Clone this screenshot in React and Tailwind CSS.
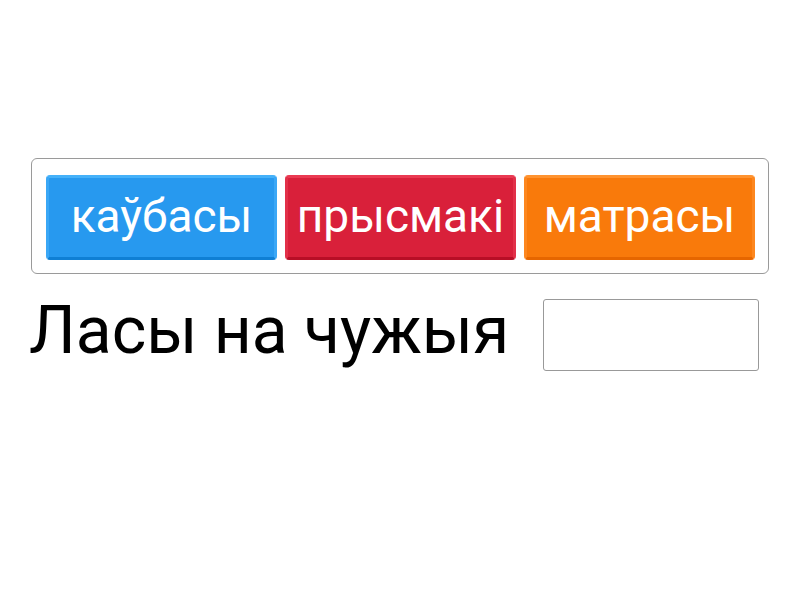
import React from 'react';

const words = [
  { label: 'каўбасы', cls: 'bg-[#2799ef] border-t-[#45b1f9] border-x-[#3aa7f6] border-b-[#0f7fd4]' },
  { label: 'прысмакі', cls: 'bg-[#d9203a] border-t-[#ea3a52] border-x-[#e23049] border-b-[#b80e26]' },
  { label: 'матрасы', cls: 'bg-[#f97a0b] border-t-[#ff9330] border-x-[#fd871f] border-b-[#e66600]' },
];

export default function App() {
  return (
    <div className="w-[800px] h-[600px] bg-white font-['Roboto','Liberation_Sans',sans-serif]">
      <div className="pt-[158px] pl-[31px]">
        <div className="w-[738px] h-[116px] border border-[#9a9a9a] rounded-[6px] flex gap-2 pl-[14px] pt-4">
          {words.map((w) => (
            <div
              key={w.label}
              className={`w-[231px] h-[85px] rounded-[4px] border-[3px] flex items-center justify-center text-white text-[46px] leading-none pb-1 ${w.cls}`}
            >
              {w.label}
            </div>
          ))}
        </div>
        <div className="flex items-center mt-[25px]">
          <span className="text-[66px] leading-none text-black -ml-[2px] -mt-2">Ласы на чужыя</span>
          <div className="ml-[34px] w-[216px] h-[72px] border border-[#999] rounded-[3px] bg-white" />
        </div>
      </div>
    </div>
  );
}
